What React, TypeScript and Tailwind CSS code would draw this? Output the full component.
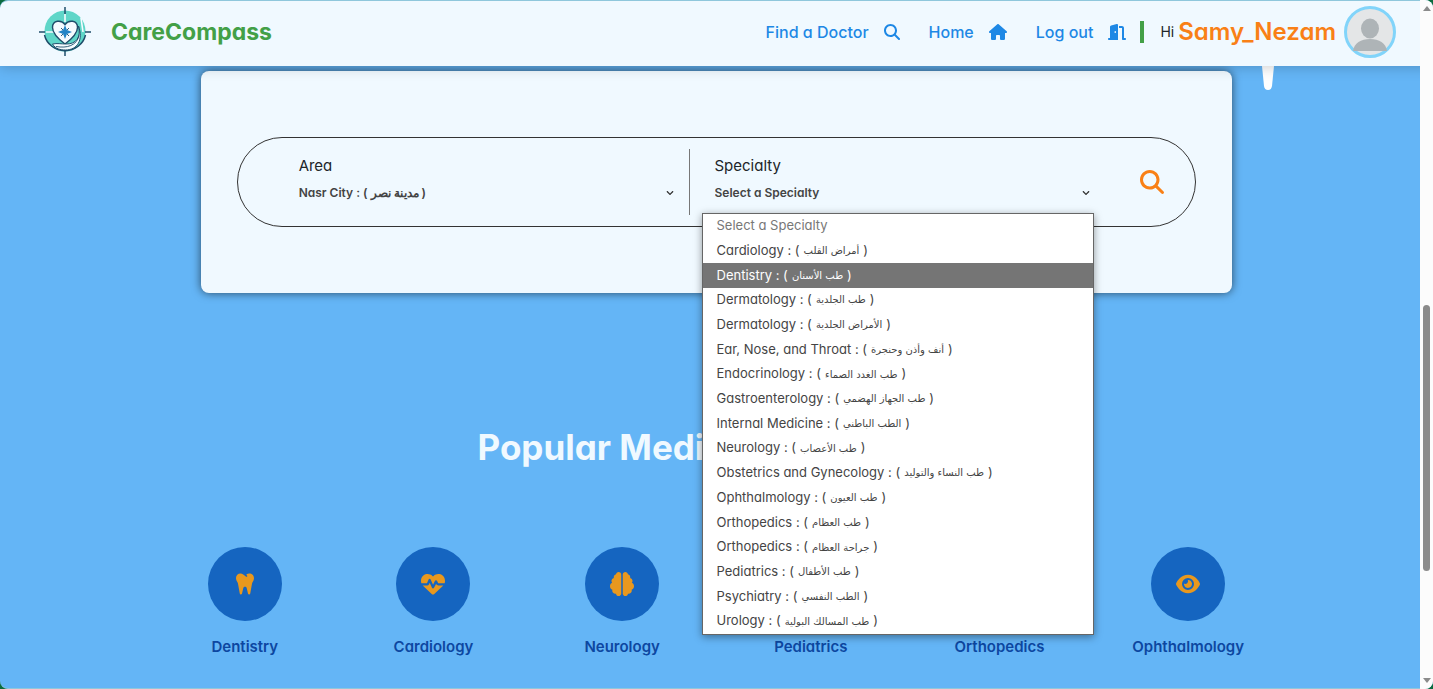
import {
  FaTooth,
  FaHeartPulse,
  FaBrain,
  FaBaby,
  FaBone,
  FaEye,
  FaDoorOpen,
  FaHouse,
  FaMagnifyingGlass,
} from "react-icons/fa6";
import { FaChevronDown } from "react-icons/fa";
import type { IconType } from "react-icons";

type Option = { en: string; ar: string };

const options: Option[] = [
  { en: "Cardiology", ar: "أمراض القلب" },
  { en: "Dentistry", ar: "طب الأسنان" },
  { en: "Dermatology", ar: "طب الجلدية" },
  { en: "Dermatology", ar: "الأمراض الجلدية" },
  { en: "Ear, Nose, and Throat", ar: "أنف وأذن وحنجرة" },
  { en: "Endocrinology", ar: "طب الغدد الصماء" },
  { en: "Gastroenterology", ar: "طب الجهاز الهضمي" },
  { en: "Internal Medicine", ar: "الطب الباطني" },
  { en: "Neurology", ar: "طب الأعصاب" },
  { en: "Obstetrics and Gynecology", ar: "طب النساء والتوليد" },
  { en: "Ophthalmology", ar: "طب العيون" },
  { en: "Orthopedics", ar: "طب العظام" },
  { en: "Orthopedics", ar: "جراحة العظام" },
  { en: "Pediatrics", ar: "طب الأطفال" },
  { en: "Psychiatry", ar: "الطب النفسي" },
  { en: "Urology", ar: "طب المسالك البولية" },
];

const popular: { name: string; Icon: IconType }[] = [
  { name: "Dentistry", Icon: FaTooth },
  { name: "Cardiology", Icon: FaHeartPulse },
  { name: "Neurology", Icon: FaBrain },
  { name: "Pediatrics", Icon: FaBaby },
  { name: "Orthopedics", Icon: FaBone },
  { name: "Ophthalmology", Icon: FaEye },
];

function Logo() {
  return (
    <svg viewBox="0 0 52 50" className="h-[50px] w-[52px]" fill="none" aria-hidden="true">
      <circle cx="26" cy="24" r="20.500" fill="#5fd6c8" />
      <path d="M5.500 28a21 20 0 0 0 41 0" stroke="#1f4e6b" strokeWidth="1.500" />
      <path d="M26 7v8M7 25h8M42 11l2 14" stroke="#f5fbff" strokeWidth="1.600" />
      <path d="M26 0v7M26 43v6M0 25h6M46 25h6" stroke="#1f4e6b" strokeWidth="1.500" />
      <path d="M26 37C18 31 13.500 26 13.500 20.500c0-7.500 9-8 12.500-3 3.500-5 12.500-4.500 12.500 3C38.500 26 34 31 26 37z" fill="#f5fbff" stroke="#1f4e6b" strokeWidth="1.400" />
      <path d="M39.500 19c3 12-3 18-12 18-6 0-9-1-14 0 3 5 8 6 13 6 12 0 18-10 13-24z" fill="#f5fbff" stroke="#1f4e6b" strokeWidth="1" />
      <path d="M17 39.500c11 2 21-1 23-11" stroke="#1f4e6b" strokeWidth=".900" />
      <path d="m22 21 8 8M30 21l-8 8" stroke="#1f4e6b" strokeWidth=".900" />
      <path d="m26 18 1.900 5.100L33 25l-5.100 1.900L26 32l-1.900-5.100L19 25l5.100-1.900z" fill="#2384c6" />
    </svg>
  );
}

function Arabic({ children }: { children: string }) {
  return (
    <span lang="ar" dir="rtl" className="font-['DejaVu_Sans',sans-serif] text-[10px] font-normal">
      {children}
    </span>
  );
}

export default function App() {
  return (
    <div className="relative h-screen overflow-hidden bg-[#0b6b3f] font-['Inter',sans-serif] [font-feature-settings:'cv11']">
      <div className="flex h-full flex-col overflow-hidden rounded-lg border-y border-[#8fc7dc] bg-[#64b5f6]">
        <header className="relative z-10 flex h-[65px] shrink-0 items-center justify-between bg-[#f0f9ff] pr-[37px] pb-[3px] pl-[39px] shadow-[0_2px_12px_rgba(0,0,0,0.18)]">
          <a href="#home" className="flex items-center gap-5 text-[23px] font-bold text-[#43a047]">
            <Logo />
            CareCompass
          </a>
          <div className="flex items-center">
            <nav className="flex items-center gap-[29px] text-base font-medium text-[#1e88e5]">
              <a href="#find" className="flex items-center gap-[15px]">Find a Doctor <FaMagnifyingGlass className="size-4" /></a>
              <a href="#home" className="flex items-center gap-[15px]">Home <FaHouse className="h-4 w-[18px]" /></a>
              <a href="#logout" className="flex items-center gap-[15px]">Log out <FaDoorOpen className="h-4 w-[18px]" /></a>
            </nav>
            <span className="ml-[14px] h-[22px] w-1 bg-[#43a047]" />
            <span className="ml-4 text-sm text-[#212529]">Hi</span>
            <span className="ml-1 text-2xl font-semibold text-[#f98016]">Samy_Nezam</span>
            <svg viewBox="0 0 52 52" className="ml-2 size-[52px]" role="img" aria-label="Profile">
              <circle cx="26" cy="26" r="24.500" fill="#e4e6e7" stroke="#81d4fa" strokeWidth="3" />
              <ellipse cx="26" cy="22.500" rx="9" ry="10" fill="#aeb4b7" />
              <path d="M9 45c1-8 8-12 17-12s16 4 17 12z" fill="#aeb4b7" />
            </svg>
          </div>
        </header>

        <main className="relative flex flex-col items-center">
          <svg viewBox="0 0 14 24" className="absolute top-0 right-[158px] h-6 w-[14px]" aria-hidden="true">
            <path d="M1 0h12l-2 20q-.5 4-4 4t-4-4z" fill="#fff" />
          </svg>

          <section className="mt-[5px] h-[222px] w-[72%] rounded-lg bg-[#f0f9ff] px-9 pt-[66px] shadow-[0_0_10px_rgba(0,0,0,0.6)]">
            <form className="flex h-[90px] items-center rounded-full border border-[#333] pr-[31px] pl-[50px]">
              <div className="grid flex-1 grid-cols-[1fr_1px_1fr] items-center">
                <div className="flex flex-col pb-[6px] pl-[11px]">
                  <label htmlFor="area" className="text-[15px] leading-6 text-[#212529]">Area</label>
                  <div className="relative mt-[3px] flex items-center">
                    <select id="area" className="w-full appearance-none text-xs leading-6 font-semibold text-[#444]">
                      <option>Nasr City : ( مدينة نصر )</option>
                    </select>
                    <FaChevronDown className="pointer-events-none absolute right-[15px] size-2 text-[#333]" />
                  </div>
                </div>
                <div className="h-[66px] bg-[#777]" />
                <div className="relative flex flex-col pb-[6px] pl-[25px]">
                  <label htmlFor="specialty" className="text-[15px] leading-6 text-[#212529]">Specialty</label>
                  <div className="relative mt-[3px] flex items-center">
                    <select id="specialty" className="w-full appearance-none text-xs leading-6 font-semibold text-[#444]">
                      <option>Select a Specialty</option>
                    </select>
                    <FaChevronDown className="pointer-events-none absolute right-0 size-2 text-[#333]" />
                  </div>
                  <ul
                    role="listbox"
                    aria-label="Specialty"
                    className="absolute top-[59px] -right-1 left-3 z-20 grid h-[422px] auto-rows-fr border border-[#666] bg-white text-[13px] text-[#444] shadow-[0_2px_8px_rgba(0,0,0,0.4)]"
                  >
                    <li role="option" aria-selected="false" className="flex min-h-0 items-center px-[14px] text-[#777]">Select a Specialty</li>
                    {options.map((o, i) => (
                      <li
                        key={i}
                        role="option"
                        aria-selected={i === 1}
                        className="flex min-h-0 items-center gap-1 px-[14px] aria-selected:bg-[#757575] aria-selected:text-white"
                      >
                        <span>{o.en} : (</span>
                        <Arabic>{o.ar}</Arabic>
                        <span>)</span>
                      </li>
                    ))}
                  </ul>
                </div>
              </div>
              <button type="submit" aria-label="Search" className="ml-[50px] text-[#f98016]">
                <FaMagnifyingGlass className="size-6" />
              </button>
            </form>
          </section>

          <h2 className="mt-[130px] text-[35px] leading-[48px] font-bold text-[#f0f9ff]">Popular Medical Specialties</h2>

          <ul className="mt-[76px] grid w-[79%] grid-cols-6">
            {popular.map(({ name, Icon }) => (
              <li key={name} className="flex flex-col items-center gap-[14px]">
                <span className="flex size-[74px] items-center justify-center rounded-full bg-[#1565c0] text-[#e8981e]">
                  <Icon className="h-6 w-auto" />
                </span>
                <span className="text-[15px] leading-6 font-semibold text-[#0d47a1]">{name}</span>
              </li>
            ))}
          </ul>
        </main>
      </div>

      <div className="absolute inset-y-0 right-0 z-10 flex w-[13px] flex-col items-center justify-between rounded-r-lg bg-[#fcfcfc] py-[6px]" aria-hidden="true">
        <svg viewBox="0 0 8 5" className="h-[5px] w-2"><path d="M0 5 4 0l4 5z" fill="#8b8b8b" /></svg>
        <span className="absolute top-[305px] h-[266px] w-[7px] rounded-full bg-[#8b8b8b]" />
        <svg viewBox="0 0 8 5" className="h-[5px] w-2"><path d="m0 0 4 5 4-5z" fill="#8b8b8b" /></svg>
      </div>
    </div>
  );
}
